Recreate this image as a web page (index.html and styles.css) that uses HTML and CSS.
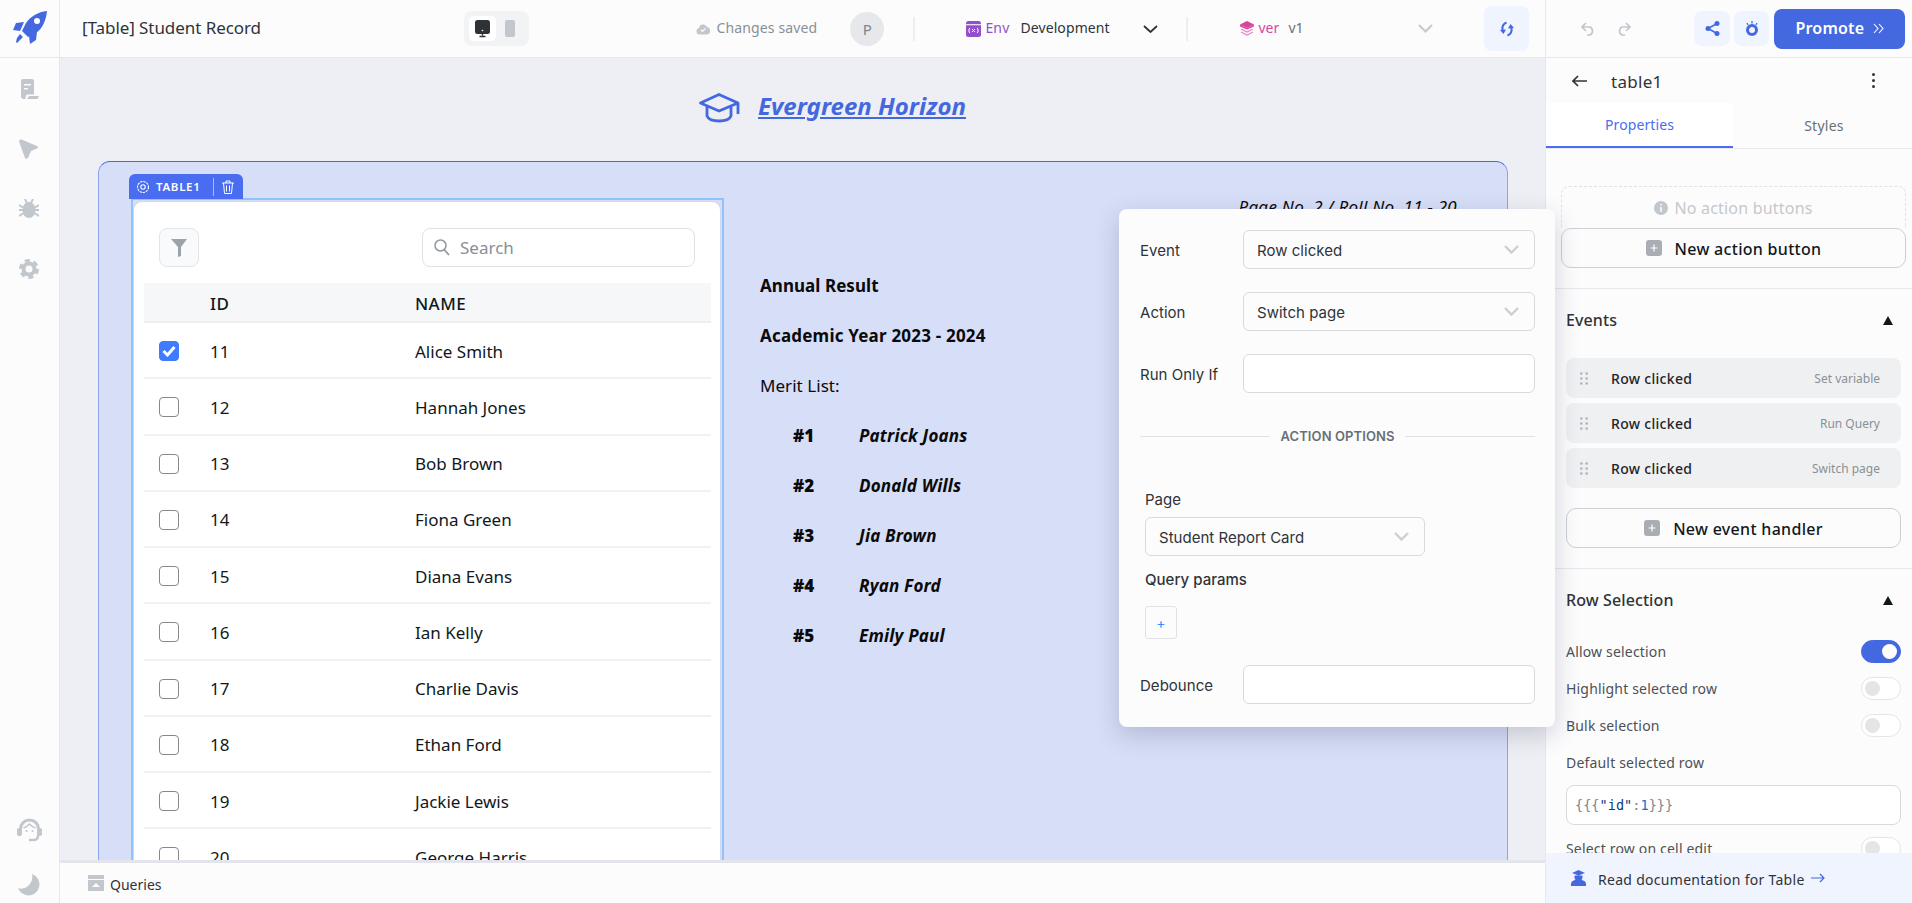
FILE: index.html
```html
<!DOCTYPE html>
<html lang="en">
<head>
<meta charset="utf-8">
<title>Student Record</title>
<link rel="stylesheet" href="styles.css">
</head>
<body>
<div class="app">
  <header class="topbar">
    <div class="logo-cell">
      <svg class="logo" viewBox="0 0 34 33"><path fill="#4368e0" d="M34 0C25 1 18 5 13 12L9 20l6 6 8-4C30 17 33 9 34 0z"/><path fill="#4368e0" d="M11 11L3 12 0 19l7 1zM24 21l-1 8-6 4-1-8zM7 23l3 3-6 6-1-1 1-4z"/><circle cx="24" cy="10" r="3" fill="#fff"/></svg>
    </div>
    <div class="doc-title">[Table] Student Record</div>
    <div class="device-toggle">
      <span class="device-on"><svg width="17" height="20" viewBox="0 0 17 20"><rect x="1" y="1" width="15" height="14" rx="2.500" fill="#2f3338"/><path d="M8.500 10v6.500M5.500 17.500h6" stroke="#2f3338" stroke-width="1.400"/><circle cx="8.500" cy="11.500" r=".8" fill="#fff"/></svg></span>
      <svg class="device-off" width="10" height="17" viewBox="0 0 10 17"><rect width="10" height="17" rx="2" fill="#c1c7cd"/></svg>
    </div>
    <div class="saved">
      <svg width="14" height="13" viewBox="0 0 14 13"><path fill="#c1c7cd" d="M3.500 12.500a3.300 3.300 0 0 1-.5-6.500A4.200 4.200 0 0 1 11 5a3.800 3.800 0 0 1 0 7.500z"/><path d="M4.800 7.700l1.700 1.700 3-3" stroke="#fff" stroke-width="1.200" fill="none"/></svg>
      <span class="lift">Changes saved</span>
    </div>
    <div class="avatar">P</div>
    <div class="vline first"></div>
    <div class="env">
      <svg width="15" height="16" viewBox="0 0 15 16"><rect width="15" height="16" rx="2.500" fill="#9450c9"/><rect x="0" y="3" width="15" height="1.300" fill="#fff" opacity=".8"/><path d="M4 7L3 8v3l1 1M11 7l1 1v3l-1 1M6 8l3 3M9 8l-3 3" stroke="#fff" stroke-width="1" fill="none"/></svg>
      <span class="env-key lift">Env</span>
      <span class="env-val lift">Development</span>
      <svg class="chev-dark" width="15" height="8" viewBox="0 0 15 8"><path d="M1 1l6.500 6L14 1" stroke="#2f3338" stroke-width="1.800" fill="none"/></svg>
    </div>
    <div class="vline second"></div>
    <div class="ver">
      <svg width="14" height="15" viewBox="0 0 14 15"><path fill="#d9459d" d="M7 0l7 3.500L7 7 0 3.500z"/><path fill="#d9459d" d="M0 3.500l7 3.500 7-3.500v2L7 8.500 0 5.500z"/><path d="M1 8l6 3 6-3M1 11l6 3 6-3" stroke="#e58ac3" stroke-width="1.300" fill="none"/></svg>
      <span class="ver-key lift">ver</span>
      <span class="ver-val lift">v1</span>
      <svg class="chev-light" width="15" height="9" viewBox="0 0 15 9"><path d="M1 1l6.500 6.500L14 1" stroke="#c8cacc" stroke-width="2.200" fill="none"/></svg>
    </div>
    <div class="refresh">
      <svg width="14" height="16" viewBox="0 0 14 16"><path d="M6.500 1.500C3 3 1.500 6 3 10.500" stroke="#4368e0" stroke-width="2" fill="none"/><path d="M0 9l3.500 4L6 8.500z" fill="#4368e0"/><path d="M7.500 14.500C11 13 12.500 10 11 5.500" stroke="#4368e0" stroke-width="2" fill="none"/><path d="M14 7l-3.500-4L8 7.500z" fill="#4368e0"/></svg>
    </div>
    <div class="top-right">
      <svg class="undo" width="15" height="14" viewBox="0 0 15 14"><path d="M5 1L1 5l4 4M1 5h8a4.500 4.500 0 0 1 0 8H6" stroke="#c1c7cd" stroke-width="1.700" fill="none"/></svg>
      <svg class="redo" width="15" height="14" viewBox="0 0 15 14"><path d="M10 1l4 4-4 4M14 5H6a4.500 4.500 0 0 0 0 8h3" stroke="#c1c7cd" stroke-width="1.700" fill="none"/></svg>
      <div class="square-btn share">
        <svg width="15" height="15" viewBox="0 0 15 15"><circle cx="12" cy="2.500" r="2.500" fill="#4368e0"/><circle cx="12" cy="12.500" r="2.500" fill="#4368e0"/><circle cx="3" cy="7.500" r="2.500" fill="#4368e0"/><path d="M12 2.500L3 7.500l9 5" stroke="#4368e0" stroke-width="1.500" fill="none"/></svg>
      </div>
      <div class="square-btn eye">
        <svg width="14" height="15" viewBox="0 0 14 15"><circle cx="7" cy="9" r="4.500" fill="none" stroke="#4368e0" stroke-width="3"/><path d="M2 2l1 2M7 0v2.500M12 2l-1 2" stroke="#4368e0" stroke-width="1.300"/></svg>
      </div>
      <div class="promote"><span class="lift">Promote</span><svg width="11" height="11" viewBox="0 0 11 11"><path d="M1 1l4 4.500L1 10M6 1l4 4.500L6 10" stroke="#fff" stroke-width="1.100" fill="none"/></svg></div>
    </div>
  </header>

  <div class="workspace">
    <nav class="sidebar">
      <div class="side-top">
        <svg width="20" height="20" viewBox="0 0 20 20"><path fill="#c1c7cd" fill-rule="evenodd" d="M2 2a2 2 0 0 1 2-2h9a2 2 0 0 1 2 2v13.500H8.500a2 2 0 0 0-1.500 3L6 20H5a3 3 0 0 1-3-3zM5 5v1.600h7V5zm0 4v1.600h4V9z"/><path fill="#c1c7cd" d="M10 17h10l-1.500 3H8z"/></svg>
        <svg width="20" height="20" viewBox="0 0 20 20"><path fill="#c1c7cd" d="M0 2.500Q0 0 2.500.5L18 7q2 1 0 2.500L12 12l-3 7q-1.500 1.500-3 0z"/></svg>
        <svg width="20" height="20" viewBox="0 0 20 20"><ellipse cx="10" cy="11" rx="6.500" ry="8" fill="#c1c7cd"/><path d="M0 6l5 3M20 6l-5 3M0 11h5M20 11h-5M0 17l5-3M20 17l-5-3M6 0l2 4M14 0l-2 4" stroke="#c1c7cd" stroke-width="2"/></svg>
        <svg width="20" height="20" viewBox="0 0 20 20"><circle cx="10" cy="10" r="5.500" fill="none" stroke="#c1c7cd" stroke-width="4"/><circle cx="10" cy="10" r="8.500" fill="none" stroke="#c1c7cd" stroke-width="3" stroke-dasharray="5 3.900"/></svg>
      </div>
      <div class="side-bottom">
        <svg class="headset" width="25" height="24" viewBox="0 0 25 24"><path d="M3.500 13V11a9 9 0 0 1 18 0v2" fill="none" stroke="#c1c7cd" stroke-width="3"/><rect x="0" y="10" width="5" height="8" rx="2" fill="#c1c7cd"/><rect x="20" y="10" width="5" height="8" rx="2" fill="#c1c7cd"/><path d="M6.500 10q3-1 6-4 3 3 6 4" fill="none" stroke="#c1c7cd" stroke-width="1.500"/><path d="M21 17q0 5-4 5h-5" fill="none" stroke="#c1c7cd" stroke-width="2.500"/><circle cx="9.500" cy="13" r="1.100" fill="#c1c7cd"/><circle cx="15.500" cy="13" r="1.100" fill="#c1c7cd"/></svg>
        <svg class="moon" width="22" height="22" viewBox="0 0 22 22"><path fill="#c1c7cd" d="M14 0a11 11 0 1 1-14 14C8 17 16 9 14 0z"/></svg>
      </div>
    </nav>

    <main class="canvas-col">
      <div class="canvas">
        <div class="page-head">
          <svg width="41" height="30" viewBox="0 0 41 30"><path d="M20 1.500L1.500 10 20 18l19-8zM8 13v10q2 5 12 5t12-5V13M39 10v11" fill="none" stroke="#4368e0" stroke-width="2.800" stroke-linejoin="round"/></svg>
          <a class="page-title">Evergreen Horizon</a>
        </div>
        <section class="container">
          <div class="widget-tag">
            <svg width="14" height="14" viewBox="0 0 14 14"><circle cx="7" cy="7" r="5.500" fill="none" stroke="#fff" stroke-width="1.100" stroke-dasharray="2.400 .8"/><circle cx="7" cy="7" r="2.200" fill="none" stroke="#fff" stroke-width="1.100"/></svg>
            <span>TABLE1</span>
            <i class="tag-sep"></i>
            <svg width="12" height="14" viewBox="0 0 12 14"><path d="M0 3h12M4 3V1h4v2M1.500 3l1 10.500h7l1-10.500M4.500 5.500v6M7.500 5.500v6" fill="none" stroke="#fff" stroke-width="1"/></svg>
          </div>
          <div class="table-frame">
            <div class="table-card">
              <div class="table-tools">
                <div class="filter-btn"><svg width="16" height="18" viewBox="0 0 16 18"><path fill="#9da3a9" d="M0 0h16L10 8v9l-3 1V8z"/></svg></div>
                <div class="search">
                  <svg width="16" height="17" viewBox="0 0 16 17"><circle cx="6.500" cy="6.500" r="5.500" fill="none" stroke="#90969c" stroke-width="1.500"/><path d="M10.500 11l4.500 5" stroke="#90969c" stroke-width="1.800"/></svg>
                  <span>Search</span>
                </div>
              </div>
              <div class="thead"><span></span><span class="th">ID</span><span class="th">NAME</span></div>
              <div class="row"><span class="check on"><svg width="14" height="12" viewBox="0 0 14 12"><path d="M1.500 6l4 4L12.500 2" stroke="#fff" stroke-width="3" fill="none"/></svg></span><span>11</span><span>Alice Smith</span></div>
              <div class="row"><span class="check"></span><span>12</span><span>Hannah Jones</span></div>
              <div class="row"><span class="check"></span><span>13</span><span>Bob Brown</span></div>
              <div class="row"><span class="check"></span><span>14</span><span>Fiona Green</span></div>
              <div class="row"><span class="check"></span><span>15</span><span>Diana Evans</span></div>
              <div class="row"><span class="check"></span><span>16</span><span>Ian Kelly</span></div>
              <div class="row"><span class="check"></span><span>17</span><span>Charlie Davis</span></div>
              <div class="row"><span class="check"></span><span>18</span><span>Ethan Ford</span></div>
              <div class="row"><span class="check"></span><span>19</span><span>Jackie Lewis</span></div>
              <div class="row"><span class="check"></span><span>20</span><span>George Harris</span></div>
            </div>
          </div>
          <div class="result">
            <p class="page-no">Page No. 2 / Roll No. 11 - 20</p>
            <p class="res-line strong">Annual Result</p>
            <p class="res-line strong year">Academic Year 2023 - 2024</p>
            <p class="res-line">Merit List:</p>
            <p class="res-line merit"><b>#1</b><em>Patrick Joans</em></p>
            <p class="res-line merit"><b>#2</b><em>Donald Wills</em></p>
            <p class="res-line merit"><b>#3</b><em>Jia Brown</em></p>
            <p class="res-line merit"><b>#4</b><em>Ryan Ford</em></p>
            <p class="res-line merit"><b>#5</b><em>Emily Paul</em></p>
          </div>
        </section>
      </div>
      <div class="queries">
        <svg width="16" height="16" viewBox="0 0 16 16"><path fill="#c1c7cd" d="M0 0h16v4H0zM0 5h16v11H0z"/><path fill="#fcfcfd" d="M8 8l4 4H4z"/></svg>
        <span>Queries</span>
      </div>
    </main>

    <aside class="panel">
      <div class="panel-scroll">
        <div class="panel-name">
          <svg width="15" height="12" viewBox="0 0 15 12"><path d="M6 1L1 6l5 5M1 6h14" stroke="#2f3338" stroke-width="1.700" fill="none"/></svg>
          <span class="name-text">table1</span>
          <svg class="dots" width="3" height="15" viewBox="0 0 3 15"><circle cx="1.500" cy="1.500" r="1.500" fill="#2f3338"/><circle cx="1.500" cy="7.500" r="1.500" fill="#2f3338"/><circle cx="1.500" cy="13.500" r="1.500" fill="#2f3338"/></svg>
        </div>
        <div class="tabs"><div class="tab active">Properties</div><div class="tab">Styles</div></div>
        <div class="action-sec">
          <div class="no-actions"><svg width="14" height="14" viewBox="0 0 14 14"><circle cx="7" cy="7" r="7" fill="#c1c7cd"/><path d="M7 6v5M7 3v1.500" stroke="#fff" stroke-width="1.500"/></svg><span>No action buttons</span></div>
          <div class="wide-btn"><svg width="16" height="16" viewBox="0 0 16 16"><rect width="16" height="16" rx="3" fill="#a9aeb4"/><path d="M8 4.500v7M4.500 8h7" stroke="#fff" stroke-width="1.200"/></svg><span>New action button</span></div>
        </div>
        <div class="prop-sec events">
          <div class="sec-head"><span>Events</span><svg width="10" height="9" viewBox="0 0 10 9"><path d="M5 0l5 9H0z" fill="#11181c"/></svg></div>
          <div class="event"><svg width="8" height="13" viewBox="0 0 8 13"><g fill="#a9b3bf"><circle cx="1.300" cy="1.500" r="1.300"/><circle cx="6.700" cy="1.500" r="1.300"/><circle cx="1.300" cy="6.500" r="1.300"/><circle cx="6.700" cy="6.500" r="1.300"/><circle cx="1.300" cy="11.500" r="1.300"/><circle cx="6.700" cy="11.500" r="1.300"/></g></svg><span class="ev-name">Row clicked</span><span class="ev-act">Set variable</span></div>
          <div class="event"><svg width="8" height="13" viewBox="0 0 8 13"><g fill="#a9b3bf"><circle cx="1.300" cy="1.500" r="1.300"/><circle cx="6.700" cy="1.500" r="1.300"/><circle cx="1.300" cy="6.500" r="1.300"/><circle cx="6.700" cy="6.500" r="1.300"/><circle cx="1.300" cy="11.500" r="1.300"/><circle cx="6.700" cy="11.500" r="1.300"/></g></svg><span class="ev-name">Row clicked</span><span class="ev-act">Run Query</span></div>
          <div class="event"><svg width="8" height="13" viewBox="0 0 8 13"><g fill="#a9b3bf"><circle cx="1.300" cy="1.500" r="1.300"/><circle cx="6.700" cy="1.500" r="1.300"/><circle cx="1.300" cy="6.500" r="1.300"/><circle cx="6.700" cy="6.500" r="1.300"/><circle cx="1.300" cy="11.500" r="1.300"/><circle cx="6.700" cy="11.500" r="1.300"/></g></svg><span class="ev-name">Row clicked</span><span class="ev-act">Switch page</span></div>
          <div class="wide-btn handler"><svg width="16" height="16" viewBox="0 0 16 16"><rect width="16" height="16" rx="3" fill="#a9aeb4"/><path d="M8 4.500v7M4.500 8h7" stroke="#fff" stroke-width="1.200"/></svg><span>New event handler</span></div>
        </div>
        <div class="prop-sec selection">
          <div class="sec-head"><span>Row Selection</span><svg width="10" height="9" viewBox="0 0 10 9"><path d="M5 0l5 9H0z" fill="#11181c"/></svg></div>
          <div class="opt first-opt"><span>Allow selection</span><i class="switch on"></i></div>
          <div class="opt"><span>Highlight selected row</span><i class="switch"></i></div>
          <div class="opt"><span>Bulk selection</span><i class="switch"></i></div>
          <div class="opt"><span>Default selected row</span></div>
          <div class="code"><span class="c-b">{{{</span><span class="c-k">"id"</span><span class="c-b">:</span><span class="c-n">1</span><span class="c-b">}}}</span></div>
          <div class="opt last-opt"><span>Select row on cell edit</span><i class="switch"></i></div>
        </div>
      </div>
      <div class="doc-link">
        <svg width="15" height="16" viewBox="0 0 15 16"><path fill="#4368e0" d="M7.500 0L14 3 7.500 5.500 1 3zM3.500 5.500h8V7a4 4 0 0 1-8 0zM0 16v-2q0-3 4-4h7q4 1 4 4v2z"/></svg>
        <span>Read documentation for Table</span>
        <svg width="14" height="10" viewBox="0 0 14 10"><path d="M9 1l4 4-4 4M0 5h13" stroke="#4368e0" stroke-width="1.200" fill="none"/></svg>
      </div>
    </aside>

    <div class="popover">
      <div class="pop-row"><label>Event</label><div class="field select"><span>Row clicked</span><svg width="15" height="9" viewBox="0 0 15 9"><path d="M1 1l6.500 6.500L14 1" stroke="#cfcfcf" stroke-width="2.400" fill="none"/></svg></div></div>
      <div class="pop-row"><label>Action</label><div class="field select"><span>Switch page</span><svg width="15" height="9" viewBox="0 0 15 9"><path d="M1 1l6.500 6.500L14 1" stroke="#cfcfcf" stroke-width="2.400" fill="none"/></svg></div></div>
      <div class="pop-row"><label>Run Only If</label><div class="field"></div></div>
      <div class="pop-divider"><i></i><span>ACTION OPTIONS</span><i></i></div>
      <div class="pop-options">
        <div class="opt-label">Page</div>
        <div class="field select page-select"><span>Student Report Card</span><svg width="15" height="9" viewBox="0 0 15 9"><path d="M1 1l6.500 6.500L14 1" stroke="#cfcfcf" stroke-width="2.400" fill="none"/></svg></div>
        <div class="opt-label params">Query params</div>
        <div class="plus">+</div>
      </div>
      <div class="pop-row"><label>Debounce</label><div class="field"></div></div>
    </div>
  </div>
</div>
</body>
</html>
```
FILE: styles.css
```css
* { box-sizing: border-box; }
html, body { margin: 0; padding: 0; }
body {
  font-family: "Noto Sans", "Liberation Sans", sans-serif;
  font-size: 14px;
  color: #2f3338;
  background: #fcfcfd;
  overflow: hidden;
}
p { margin: 0; }
svg { display: block; flex: none; }
i { font-style: normal; display: block; }
.lift { padding-bottom: 2px; }

.app { width: 1912px; height: 903px; display: flex; flex-direction: column; overflow: hidden; }

/* top bar */
.topbar { height: 58px; flex: none; display: flex; align-items: center; background: #fcfcfd; border-bottom: 1px solid #e6e8eb; }
.logo-cell { width: 60px; height: 57px; flex: none; border-right: 1px solid #e6e8eb; padding: 11px 0 0 13px; }
.logo { width: 34px; height: 33px; }
.doc-title { margin-left: 22px; width: 382px; font-size: 17px; letter-spacing: -.07px; padding-bottom: 3px; color: #2f3338; }
.device-toggle { width: 65px; height: 35px; flex: none; background: #f1f3f5; border-radius: 8px; display: flex; align-items: center; padding-left: 5px; }
.device-on { width: 27px; height: 25px; background: #fff; border-radius: 5px; display: flex; align-items: center; justify-content: center; }
.device-off { margin-left: 9px; }
.saved { margin-left: 167px; width: 155px; display: flex; align-items: center; gap: 7px; color: #889096; font-size: 14px; letter-spacing: .12px; }
.avatar { width: 34px; height: 34px; flex: none; border-radius: 50%; background: #e6e8eb; color: #7e868c; display: flex; align-items: center; justify-content: center; font-size: 15px; }
.vline { width: 2px; height: 24px; background: #eceef0; flex: none; }
.vline.first { margin-left: 29px; }
.env { margin-left: 51px; width: 192px; display: flex; align-items: center; flex: none; }
.env-key { margin-left: 4px; color: #9450c9; letter-spacing: .2px; width: 35px; }
.env-val { width: 123px; letter-spacing: .1px; }
.vline.second { margin-left: 28px; }
.ver { margin-left: 52px; width: 193px; display: flex; align-items: center; flex: none; }
.ver-key { margin-left: 4px; color: #d9459d; width: 30px; }
.ver-val { width: 130px; color: #687076; }
.refresh { margin-left: 51px; width: 45px; height: 45px; flex: none; background: #f0f4ff; border-radius: 8px; display: flex; align-items: center; justify-content: center; }
.top-right { margin-left: 16px; width: 367px; height: 57px; border-left: 1px solid #e6e8eb; display: flex; align-items: center; padding-left: 35px; }
.redo { margin-left: 20px; }
.square-btn { width: 35px; height: 35px; background: #f0f4ff; border-radius: 8px; display: flex; align-items: center; justify-content: center; }
.share { margin-left: 63px; width: 36px; }
.eye { margin-left: 4px; }
.promote { margin-left: 5px; width: 131px; height: 40px; border-radius: 8px; background: #4368e0; color: #fff; font-size: 16px; font-weight: 600; letter-spacing: .2px; display: flex; align-items: center; justify-content: center; gap: 9px; }

/* body */
.workspace { flex: 1; min-height: 0; display: flex; position: relative; }
.sidebar { width: 60px; flex: none; background: #fcfcfd; border-right: 1px solid #e6e8eb; display: flex; flex-direction: column; justify-content: space-between; align-items: center; padding: 21px 1px 7px 0; }
.side-top { display: flex; flex-direction: column; gap: 40px; }
.side-bottom { display: flex; flex-direction: column; align-items: center; gap: 32px; }

.canvas-col { flex: 1; min-width: 0; display: flex; flex-direction: column; }
.canvas { flex: 1; min-height: 0; overflow: hidden; background: #eeeff4; }
.page-head { height: 103px; display: flex; align-items: center; gap: 18px; padding: 0 0 3px 639px; }
.page-title { font-size: 24px; font-weight: 700; font-style: italic; color: #4368e0; text-decoration: underline; margin-bottom: 6px; }
.container { position: relative; margin-left: 38px; width: 1410px; height: 760px; background: #d7def7; border: 1px solid #8aa3ee; border-top-color: #4368e0; border-radius: 12px 12px 0 0; display: flex; padding: 36px 0 0 32px; }
.widget-tag { position: absolute; left: 30px; top: 12px; height: 25px; width: 114px; background: #4a6cf0; border-radius: 6px 6px 0 0; display: flex; align-items: center; color: #fff; padding-left: 7px; font-size: 11.500px; font-weight: 600; letter-spacing: .7px; }
.widget-tag span { margin-left: 6px; width: 51px; }
.tag-sep { width: 1px; height: 18px; background: #a9bbf7; margin: 0 8px 0 6px; }
.table-frame { width: 593px; flex: none; border: 2px solid #90c2fc; padding: 2px 2px 0 1px; }
.table-card { background: #fff; border-radius: 8px 8px 0 0; height: 100%; padding-top: 26px; box-shadow: 0 0 2px rgba(0,0,0,.12); }
.table-tools { display: flex; justify-content: space-between; padding: 0 25px; height: 39px; }
.filter-btn { width: 40px; height: 39px; border: 1.500px solid #e4e5e8; border-radius: 8px; background: #f9fafb; display: flex; align-items: center; justify-content: center; }
.search { width: 273px; height: 39px; border: 1.500px solid #dfe1e4; border-radius: 8px; display: flex; align-items: center; padding-left: 11px; gap: 10px; color: #889096; font-size: 17px; }
.thead { margin: 16px 9px 0 10px; height: 40px; background: #f6f7f9; border-bottom: 2px solid #eceef0; display: grid; grid-template-columns: 66px 205px 1fr; align-items: center; padding-top: 2px; }
.th { font-size: 17px; font-weight: 500; color: #11181c; letter-spacing: .4px; }
.row { margin: 0 9px 0 10px; height: 56.250px; border-bottom: 2px solid #f0f1f3; display: grid; grid-template-columns: 66px 205px 1fr; align-items: center; font-size: 17px; color: #11181c; padding-top: 2px; }
.check { width: 20px; height: 20px; margin-left: 15px; border: 1.500px solid #85898d; border-radius: 4px; background: #fff; display: flex; align-items: center; justify-content: center; }
.check.on { background: #3e7bff; border-color: #3e7bff; }

.result { flex: 1; min-width: 0; padding-left: 36px; color: #0a0a0a; font-size: 17px; }
.page-no { line-height: 18px; margin-bottom: 45px; text-align: right; padding-right: 50px; font-style: italic; letter-spacing: .25px; }
.res-line { line-height: 50px; height: 50px; letter-spacing: .05px; }
.res-line.year { letter-spacing: .2px; }
.strong { font-weight: 700; }
.merit { display: flex; padding-left: 33px; font-weight: 700; }
.merit b { width: 66px; }
.merit em { font-style: italic; letter-spacing: .2px; }

.queries { height: 43px; flex: none; border-top: 3px solid #e4e5ec; background: #fcfcfd; display: flex; align-items: center; gap: 6px; padding-left: 28px; font-size: 14px; }
.queries span { padding-top: 2px; }

/* right panel */
.panel { width: 367px; flex: none; background: #fcfcfd; border-left: 1px solid #e6e8eb; display: flex; flex-direction: column; }
.panel-scroll { flex: 1; min-height: 0; overflow: hidden; }
.panel-name { height: 45px; display: flex; align-items: center; padding: 0 0 0 26px; font-size: 17px; }
.name-text { margin-left: 24px; width: 261px; letter-spacing: .3px; padding-top: 2px; }
.tabs { display: flex; height: 46px; border-bottom: 1px solid #e6e8eb; }
.tab { width: 179px; height: 45px; display: flex; align-items: center; justify-content: center; color: #687076; font-size: 14px; letter-spacing: .25px; flex: 1; padding-left: 3px; }
.tab.active { flex: none; width: 187px; background: #fff; color: #4a6cf0; border-bottom: 2px solid #4a6cf0; letter-spacing: .1px; padding-left: 0; }
.action-sec { padding: 37px 6px 20px 15px; border-bottom: 1px solid #e6e8eb; }
.no-actions { height: 42px; border: 1px dashed #e0e2e5; border-bottom: 0; border-radius: 8px 8px 0 0; display: flex; align-items: center; justify-content: center; gap: 6px; font-size: 16px; color: #c5c8cc; letter-spacing: .2px; }
.wide-btn { height: 40px; border: 1px solid #ccd0d5; border-radius: 10px; background: #fcfcfd; display: flex; align-items: center; justify-content: center; gap: 13px; font-size: 16px; font-weight: 500; color: #11181c; letter-spacing: .3px; }
.wide-btn span { padding-top: 2px; }
.prop-sec { padding: 0 11px 0 20px; }
.events { padding-bottom: 20px; border-bottom: 1px solid #e6e8eb; }
.sec-head { height: 62px; display: flex; align-items: center; justify-content: space-between; font-size: 16px; font-weight: 500; padding-right: 8px; letter-spacing: .1px; }
.events .sec-head { height: 69px; padding-bottom: 7px; }
.selection .sec-head { height: 62px; }
.event { height: 40px; margin-bottom: 5px; background: #eff0f2; border-radius: 8px; display: flex; align-items: center; padding: 0 21px 0 14px; }
.ev-name { margin-left: 23px; flex: 1; font-size: 14px; font-weight: 500; color: #1f2428; letter-spacing: .3px; }
.ev-act { font-size: 12px; color: #889096; }
.handler { margin-top: 20px; }
.opt { height: 37px; display: flex; align-items: center; justify-content: space-between; font-size: 14px; color: #4c5155; letter-spacing: .18px; }
.opt span { padding-bottom: 1px; }
.first-opt { margin-top: 2px; }
.switch { width: 40px; height: 23px; border-radius: 12px; border: 1.500px solid #e4e5e8; background: #fff; position: relative; }
.switch::after { content: ""; position: absolute; left: 3px; top: 2.500px; width: 15px; height: 15px; border-radius: 50%; background: #e4e5e7; }
.switch.on { background: #4368e0; border-color: #4368e0; }
.switch.on::after { left: auto; right: 3px; background: #fff; }
.code { height: 40px; margin: 4px 0 5px; border: 1px solid #d7dbdf; border-radius: 8px; background: #fff; display: flex; align-items: center; padding-left: 8px; font-family: "DejaVu Sans Mono", monospace; font-size: 13.500px; letter-spacing: .05px; }
.c-b { color: #7e868c; }
.c-k { color: #0b3a8a; }
.c-n { color: #1a6fd4; }
.last-opt { height: 37px; margin-top: 0; }
.doc-link { height: 50px; flex: none; background: #f0f4ff; display: flex; align-items: center; padding-left: 25px; font-size: 14px; color: #2f3338; letter-spacing: .29px; }
.doc-link span { margin: 0 6px 0 12px; padding-top: 3px; }

/* popover */
.popover { position: absolute; left: 1119px; top: 151px; width: 436px; height: 518px; background: #fcfcfd; border-radius: 8px; box-shadow: 0 8px 24px rgba(48,56,90,.22); padding: 21px 20px 0 21px; font-family: Inter, sans-serif; font-size: 15px; letter-spacing: .03px; color: #2f3338; }
.pop-row { display: flex; align-items: center; margin-bottom: 23px; }
.pop-row label { width: 103px; flex: none; padding-top: 1px; }
.field { height: 39px; flex: 1; border: 1px solid #d7dbdf; border-radius: 6px; background: #fff; }
.select { display: flex; align-items: center; justify-content: space-between; padding: 0 15px 0 13px; background: #fcfcfd; }
.select span { padding-top: 2px; }
.pop-divider { display: flex; align-items: center; gap: 10px; margin: 36px 0 0; height: 14px; font-size: 13px; font-weight: 600; color: #687076; letter-spacing: .1px; }
.pop-divider i { flex: 1; height: 1px; background: #e0e2e5; }
.pop-options { padding-left: 5px; padding-top: 48px; }
.opt-label { height: 17px; line-height: 17px; color: #2f3338; }
.page-select { width: 280px; flex: none; margin-top: 9px; }
.params { margin-top: 15px; font-weight: 500; }
.plus { margin-top: 18px; width: 32px; height: 33px; border: 1px solid #e0e2e5; border-radius: 3px; display: flex; align-items: center; justify-content: center; color: #3e8bff; font-size: 14px; margin-bottom: 26px; }
```
